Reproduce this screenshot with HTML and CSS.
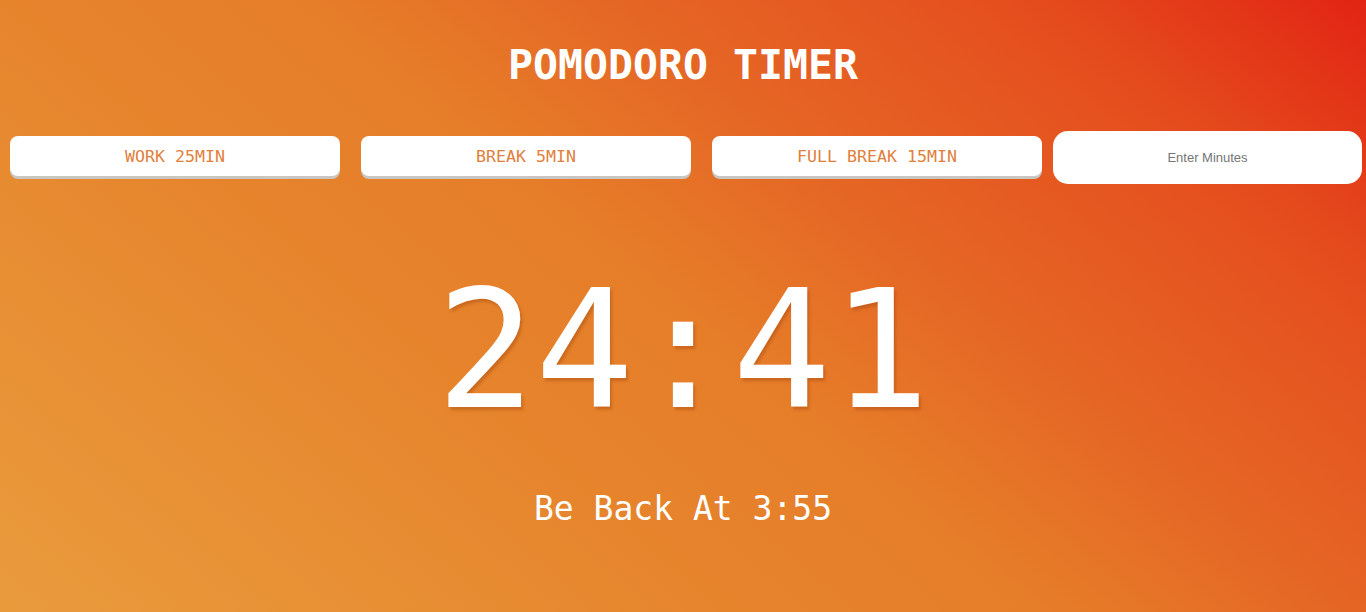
FILE: index.html
```html
<!DOCTYPE html>
<html lang="en">
<head>
<meta charset="utf-8">
<title>Pomodoro Timer</title>
<link rel="stylesheet" href="styles.css">
</head>
<body>
<main class="app">
  <h1 class="title">POMODORO TIMER</h1>
  <div class="controls">
    <button class="preset">WORK 25MIN</button>
    <button class="preset">BREAK 5MIN</button>
    <button class="preset">FULL BREAK 15MIN</button>
    <input class="minutes" type="text" placeholder="Enter Minutes">
  </div>
  <div class="clock">24:41</div>
  <p class="back">Be Back At 3:55</p>
</main>
</body>
</html>
```
FILE: styles.css
```css
* { box-sizing: border-box; }

html, body {
  margin: 0;
  padding: 0;
}

body {
  min-height: 612px;
  overflow: hidden;
  font-family: "DejaVu Sans Mono", monospace;
}

.app {
  min-height: 612px;
  display: flex;
  flex-direction: column;
  align-items: stretch;
  background: linear-gradient(40deg,
    #e99b3c 0%,
    #e6842c 35%,
    #e67d29 50%,
    #e56524 65%,
    #e5521f 80%,
    #e44a1c 85%,
    #e22414 100%);
}

.title {
  margin: 40px 0 0;
  height: 51px;
  line-height: 50px;
  font-size: 41.5px;
  font-weight: bold;
  color: #fff;
  text-align: center;
}

.controls {
  margin-top: 40px;
  padding-left: 10px;
  padding-right: 4px;
  display: flex;
  align-items: flex-start;
  height: 53px;
}

.preset {
  flex: 0 0 330px;
  height: 40px;
  margin-top: 5px;
  margin-right: 21px;
  border: none;
  border-radius: 8px;
  background: #fff;
  box-shadow: 0 3px 0 #c9c5c1;
  color: #e0803c;
  font-family: "DejaVu Sans Mono", monospace;
  font-size: 16.6px;
  cursor: pointer;
}

.preset:nth-of-type(3) {
  margin-right: 11px;
}

.minutes {
  flex: 1 1 auto;
  min-width: 0;
  height: 53px;
  border: none;
  border-radius: 15px;
  background: #fff;
  text-align: center;
  font-family: "Liberation Sans", Arial, sans-serif;
  font-size: 13px;
  color: #333;
  outline: none;
}

.minutes::placeholder {
  color: #757575;
}

.clock {
  margin-top: 67px;
  height: 200px;
  line-height: 200px;
  font-size: 164px;
  color: #fff;
  text-align: center;
  text-shadow: 2px 3px 3px rgba(150, 60, 10, 0.35);
}

.back {
  margin: 38px 0 0;
  height: 40px;
  line-height: 40px;
  font-size: 33px;
  color: #fff;
  text-align: center;
}
```
